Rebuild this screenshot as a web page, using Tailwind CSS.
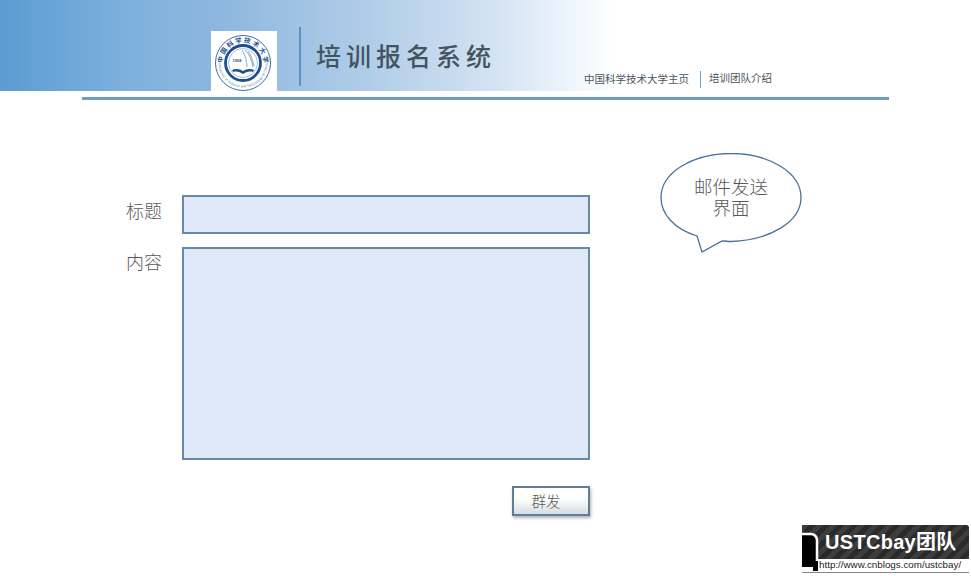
<!DOCTYPE html>
<html lang="zh-CN">
<head>
  <meta charset="UTF-8" />
  <title>培训报名系统</title>
  <script src="https://cdn.jsdelivr.net/npm/@tailwindcss/browser@4"></script>
</head>
<body class="bg-white font-['Noto_Sans_CJK_SC','Noto_Sans',sans-serif]">
<div class="w-[971px] h-[576px] overflow-hidden flex flex-col">

  <!-- header -->
  <header class="h-[91px] shrink-0 flex items-end pl-[211px] bg-[linear-gradient(to_right,#5b9cd2_0px,#7fb1de_130px,#8db7de_220px,#b3cfe9_380px,#d5e4f3_500px,#eef5fb_570px,#ffffff_615px)]">
    <div class="w-[66px] h-[60px] bg-white">
      <svg width="66" height="60" viewBox="0 0 66 60">
        <g transform="translate(3 3)">
          <defs>
            <path id="arcTop" d="M8.500 29a20.500 20.500 0 0 1 41 0" />
            <path id="arcBottom" d="M4.500 29a24.500 24.500 0 0 0 49 0" />
          </defs>
          <circle cx="29" cy="29" r="27.500" fill="none" stroke="#2a5c98" stroke-width="0.9" />
          <circle cx="29" cy="29" r="17.500" fill="none" stroke="#1d4f8f" stroke-width="2.800" />
          <circle cx="29" cy="29" r="14.500" fill="#fff" stroke="#6f93bd" stroke-width="0.6" />
          <text font-size="6.500" font-weight="700" fill="#1d4f8f" font-family="'Noto Sans CJK SC',sans-serif"><textPath href="#arcTop" textLength="64">中国科学技术大学</textPath></text>
          <text font-size="3.500" fill="#5d7ea8" font-family="'Liberation Sans',sans-serif"><textPath href="#arcBottom" textLength="76">University of Science and Technology of China</textPath></text>
          <text x="23" y="28" text-anchor="middle" font-size="4" font-weight="700" fill="#1d4f8f" font-family="'Liberation Sans',sans-serif">1958</text>
          <path d="M31 16c4 4 7 10 8 17M34 17c3 4 5 10 6 15M28 16c3 5 5 11 5 17" fill="none" stroke="#6f93bd" stroke-width="0.8" />
          <path d="M18 36c4-2 8-1 11 1 3-2 7-3 11-1l-1 2c-4-1-7 0-10 2-3-2-6-3-10-2z" fill="#1d4f8f" />
        </g>
      </svg>
    </div>
    <div class="w-[2px] h-[59px] mb-[5px] ml-[22px] bg-[#5d93c2]"></div>
    <h1 class="ml-[15px] mb-[20px] text-[25px] leading-[32px] tracking-[5px] font-medium text-[#44545f]">培训报名系统</h1>
    <nav class="ml-[88px] mb-[3px] flex items-center text-[10.5px] leading-[16px] text-[#4a5560]">
      <a>中国科学技术大学主页</a>
      <span class="w-[1px] h-[17px] mx-[11px] bg-[#6a9fca]"></span>
      <a class="-ml-[3px] mb-[2px]">培训团队介绍</a>
    </nav>
  </header>
  <div class="ml-[82px] mt-[6px] w-[807px] h-[3px] shrink-0 bg-[#6a9fca]"></div>

  <!-- form + bubble -->
  <div class="flex items-start">
    <form class="w-[590px] pl-[126px] pt-[95px]">
      <div class="flex">
        <label class="w-[56px] pt-[3px] text-[18px] leading-[24px] font-light text-[#595959]">标题</label>
        <div class="w-[408px] h-[39px] bg-[#dee8f6] border-2 border-[#6488ae]"></div>
      </div>
      <div class="flex mt-[13px]">
        <label class="w-[56px] pt-[2px] text-[18px] leading-[24px] font-light text-[#595959]">内容</label>
        <div class="w-[408px] h-[213px] bg-[#dee8f6] border-2 border-[#6488ae]"></div>
      </div>
      <div class="flex justify-end mt-[26px]">
        <button type="button" class="w-[78px] h-[30px] pr-[10px] text-[14.5px] font-light text-[#595959] border-2 border-[#5f7d9b] bg-[linear-gradient(to_bottom,#ffffff_40%,#d8dde3)] shadow-[1px_2px_3px_rgba(0,0,0,0.3)]">群发</button>
      </div>
    </form>

    <div class="relative ml-[70px] mt-[53px] w-[142px] h-[100px]">
      <svg class="absolute inset-0" width="142" height="100" viewBox="0 0 142 100">
        <path d="M37 83C14 76 1 61 1 44.500 1 20 32 .5 71 .5s70 19.500 70 44-31 42.500-70 44c-3 0-6-.5-9-.5L42 99z" fill="#fff" stroke="#4d7199" stroke-width="1.300" />
      </svg>
      <p class="relative pt-[23px] text-center text-[18.5px] leading-[21px] font-light text-[#595959]">邮件发送<br />界面</p>
    </div>
  </div>

  <!-- team logo -->
  <div class="relative ml-[802px] mt-[9px] w-[167px] h-[48px] shrink-0">
    <div class="h-[34px] rounded-tr-[3px] pl-[23px] flex items-center bg-[repeating-linear-gradient(135deg,#3d3d3d_0px,#3d3d3d_5px,#2a2a2a_5px,#2a2a2a_10px)]">
      <span class="text-[20px] leading-[24px] font-bold tracking-[0.3px] text-white font-['Liberation_Sans','Noto_Sans_CJK_SC',sans-serif]">USTCbay团队</span>
    </div>
    <svg class="absolute left-0 top-[6px]" width="18" height="36" viewBox="0 0 18 36">
      <path d="M0 4h8a6 6 0 0 1 6 6v26H0z" fill="#000" />
      <path d="M0 3h9a6 6 0 0 1 6 6v27" fill="none" stroke="#fff" stroke-width="2.500" />
    </svg>
    <div class="absolute left-[11px] top-[36px] w-[5px] h-[10px] bg-black"></div>
    <div class="pl-[17px] h-[14px] text-[9.8px] leading-[12px] text-[#222222] border-b border-[#888888] font-['Liberation_Sans',sans-serif]">http://www.cnblogs.com/ustcbay/</div>
  </div>
</div>
</body>
</html>
